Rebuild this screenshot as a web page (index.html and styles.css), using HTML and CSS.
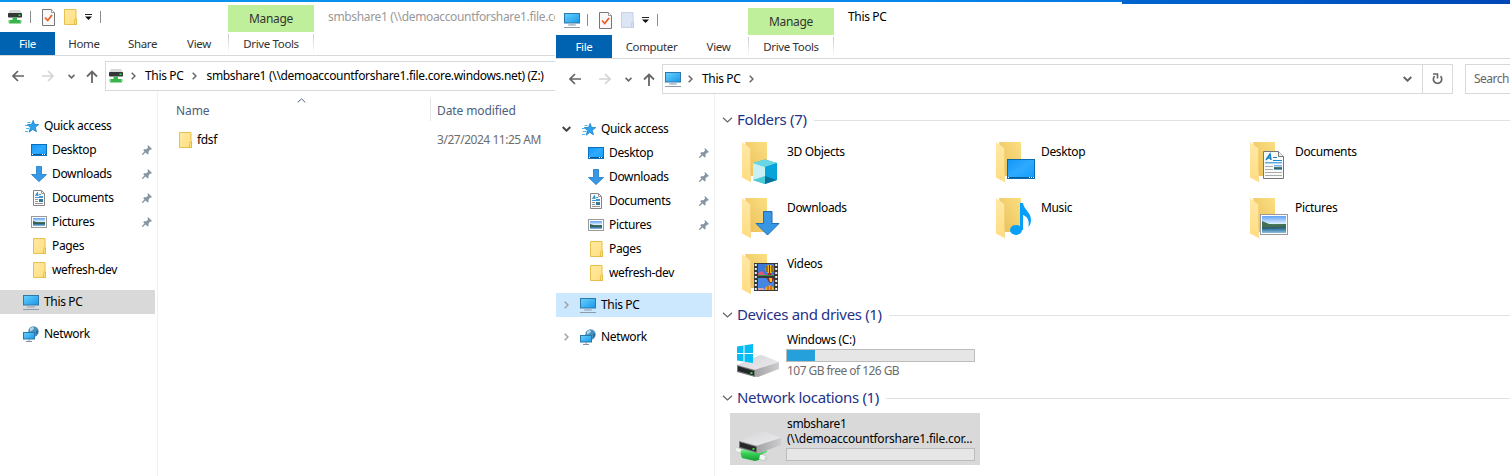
FILE: index.html
```
<!DOCTYPE html>
<html lang="en">
<head>
<meta charset="utf-8">
<title>File Explorer</title>
<link rel="stylesheet" href="styles.css">
</head>
<body>
<svg class="defs" width="0" height="0">
  <defs>
    <linearGradient id="gScreen" x1="0" y1="0" x2="1" y2="1"><stop offset="0" stop-color="#67d2ff"/><stop offset="1" stop-color="#1b96e8"/></linearGradient>
    <linearGradient id="gBlue" x1="0" y1="0" x2="1" y2="1"><stop offset="0" stop-color="#1296f8"/><stop offset=".5" stop-color="#2eaaff"/><stop offset="1" stop-color="#129dfa"/></linearGradient>
    <linearGradient id="gFolder" x1="0" y1="0" x2="1" y2="1"><stop offset="0" stop-color="#ffe9a2"/><stop offset="1" stop-color="#ffdf7e"/></linearGradient>
    <linearGradient id="gBack" x1="0" y1="1" x2="1" y2="0"><stop offset="0" stop-color="#e9be56"/><stop offset="1" stop-color="#fbdf83"/></linearGradient>
    <linearGradient id="gFlap" x1="0" y1="0" x2="0" y2="1"><stop offset="0" stop-color="#ffe9a8"/><stop offset="1" stop-color="#ffdc80"/></linearGradient>
    <linearGradient id="gSky" x1="0" y1="0" x2="0" y2="1"><stop offset="0" stop-color="#5fa0f6"/><stop offset=".45" stop-color="#dceefc"/><stop offset=".5" stop-color="#4e7d67"/><stop offset=".7" stop-color="#37665d"/><stop offset=".8" stop-color="#3f82ae"/><stop offset="1" stop-color="#8fc0dc"/></linearGradient>
    <linearGradient id="gMetal" x1="0" y1="0" x2="1" y2="1"><stop offset="0" stop-color="#d6d6da"/><stop offset="1" stop-color="#ececee"/></linearGradient>
    <linearGradient id="gSide" x1="0" y1="0" x2="1" y2="0"><stop offset="0" stop-color="#a2a2a5"/><stop offset="1" stop-color="#cdcdd0"/></linearGradient>
    <linearGradient id="gPipe" x1="0" y1="0" x2="0" y2="1"><stop offset="0" stop-color="#8bf09d"/><stop offset=".4" stop-color="#35cf53"/><stop offset="1" stop-color="#169b34"/></linearGradient>
  </defs>
  <symbol id="pc" viewBox="0 0 16 16"><rect x=".5" y="1.5" width="15" height="9.5" fill="url(#gScreen)" stroke="#2f78ab"/><path d="M4 13h8" stroke="#8ea4b5"/><path d="M6 12.3h4" stroke="#a8b8c4"/><path d="M0 15.500h16" stroke="#8d9baa"/></symbol>
  <symbol id="netdrive" viewBox="0 0 16 16"><path d="M3 1h10l2 3.500H1z" fill="#d9d9db"/><rect x="1" y="4" width="14" height="4.500" rx=".8" fill="#353637"/><rect x="11.500" y="5.500" width="2" height="1.500" fill="#39df50"/><path d="M5.500 8.500h4.500v2.500h4v3.500H2V11h3.500z" fill="#39b44c"/><path d="M1 12.500h2M13 12.500h2" stroke="#8fdf9a" stroke-width="2"/></symbol>
  <symbol id="check" viewBox="0 0 13 17"><path d="M.5.5h9l3 3v13H.5z" fill="#f8f8f8" stroke="#777"/><path d="M9.500.5v3h3" fill="#fff" stroke="#999"/><path d="M3 8.500l2.700 3L10 6" fill="none" stroke="#f05a22" stroke-width="1.700"/></symbol>
  <symbol id="folder" viewBox="0 0 13 16"><path d="M.5.5h11.500v9.500h.5v5.500H.5z" fill="url(#gFolder)" stroke="#e8c04c"/><path d="M10.500 15.500v-4l1-1.500h1v5.500z" fill="#ffe48c" stroke="#dfb43d" stroke-width=".8"/></symbol>
  <symbol id="folder-ghost" viewBox="0 0 13 16"><path d="M.5.5h11.500v9.500h.5v5.500H.5z" fill="#dbe5f4" stroke="#c6d2e5"/><path d="M10.500 15.500v-4l1-1.500h1v5.500z" fill="#d4dff0" stroke="#bdcbe1" stroke-width=".8"/></symbol>
  <symbol id="qat-menu" viewBox="0 0 7 6"><path d="M0 .5h7" stroke="#222"/><path d="M0 2.500h7L3.500 6z" fill="#111"/></symbol>
  <symbol id="back" viewBox="0 0 12 12"><path d="M12 6H1.200M6 1L1 6l5 5" fill="none" stroke="currentColor" stroke-width="1.700"/></symbol>
  <symbol id="up" viewBox="0 0 12 13"><path d="M6 13V1.500M1 6.500l5-5 5 5" fill="none" stroke="currentColor" stroke-width="1.800"/></symbol>
  <symbol id="chev" viewBox="0 0 10 6"><path d="M.5.7L5 5 9.500.7" fill="none" stroke="currentColor" stroke-width="1.200"/></symbol>
  <symbol id="chev-bold" viewBox="0 0 8 5"><path d="M.6.700L4 4 7.400.700" fill="none" stroke="currentColor" stroke-width="1.800"/></symbol>
  <symbol id="chev-r" viewBox="0 0 5 8"><path d="M.7.7L4 4 .7 7.300" fill="none" stroke="currentColor" stroke-width="1.500"/></symbol>
  <symbol id="refresh" viewBox="0 0 11 12"><path d="M8.500 3.200A4.200 4.200 0 1 1 2.600 3.200" fill="none" stroke="#666" stroke-width="1.700"/><path d="M1 1h4.500v4.500" fill="none" stroke="#666" stroke-width="1.600"/></symbol>
  <symbol id="star" viewBox="0 0 14 13"><path d="M8.200.3l1.300 4 4.300.3-3.500 2.700 1.200 4.500-3.700-2.400-3.700 2.800 1.300-4.600L2.300 4.600l4.300-.3z" fill="#2aa3f0" stroke="#1878bd" stroke-width=".7"/><path d="M2.500 2.500h3M0 5.500h3M1 8.500h3M0 11.500h3" stroke="#4fb5ef"/></symbol>
  <symbol id="desktop" viewBox="0 0 16 12"><rect x=".5" y=".5" width="15" height="11" fill="url(#gBlue)" stroke="#0a6fbd"/><path d="M1 10.500h14" stroke="#08588f"/><path d="M1 10.500h1M11 10.500h1M13 10.500h1" stroke="#fff"/></symbol>
  <symbol id="down" viewBox="0 0 16 16"><path d="M5.500.5h5v8h5L8 15.600.500 8.500h5z" fill="#3698e8" stroke="#1f78c5" stroke-width=".8"/></symbol>
  <symbol id="doc" viewBox="0 0 12 16"><path d="M.5.5h8l3 3v12H.5z" fill="#fafafa" stroke="#858585"/><path d="M8.500.5v3h3" fill="none" stroke="#999"/><path d="M2.500 6L4.500 2.500 5 6M3 5h2" stroke="#197fc4" fill="none"/><path d="M6 4.500h2M6 6.500h4M2 7.500h8" stroke="#2a8fd3" stroke-width=".9"/><path d="M2 9.500h3M2 11.500h3M2 13.500h8" stroke="#999"/><rect x="6" y="9" width="4" height="3" fill="#35789d"/></symbol>
  <symbol id="pic" viewBox="0 0 16 12"><rect x=".5" y=".5" width="15" height="11" fill="#fff" stroke="#999"/><rect x="2" y="2" width="12" height="8" fill="url(#gSky)"/><path d="M2 5l5 1.500 4 .5 3-.5v1.300H2z" fill="#365f55"/></symbol>
  <symbol id="net" viewBox="0 0 16 16"><circle cx="10.500" cy="5.500" r="5.200" fill="#4a90ba"/><path d="M7 2.500l3-1.700 1 2-2 1.700-2 1z" fill="#b5d9e8"/><path d="M13 5l2-1v3l-2 2z" fill="#2d6f9c"/><rect x=".5" y="6.500" width="11" height="6.500" fill="url(#gScreen)" stroke="#2779ad"/><path d="M6 13v2M3 15.500h6" stroke="#8094a5"/></symbol>
  <symbol id="pin" viewBox="0 0 10 10"><path d="M6 0l4 4-1 .8-.7-.2-1.800 1.900.1 2.200-1 .9L1.200 5.200l.9-1 2.300.1L6.100 2.500 5.500 1z" fill="#8795a3"/><path d="M3.500 6.500L.3 9.700" stroke="#8795a3" stroke-width="1.300"/></symbol>
  <symbol id="bigfolder" viewBox="0 0 46 44"><path d="M3 0h22v34H9z" fill="url(#gBack)"/><path d="M0 0l8.500 6.500V40L0 35.500z" fill="url(#gFlap)"/><path d="M8.500 6.500V40" stroke="#f4cd70" stroke-width=".6"/></symbol>
  <symbol id="hdd" viewBox="0 0 44 24"><path d="M1 11L23 1.500q2-.8 4 0L43 8 18 16z" fill="url(#gMetal)"/><path d="M18 16l25-8v7L22 23l-4-.5z" fill="url(#gSide)"/><path d="M1 11l18 5v7L1 18z" fill="#77777a"/><path d="M2 12.300L18 17v4.500L2 17z" fill="#262729"/><rect x="14.500" y="18" width="2" height="2" fill="#35dc45"/></symbol>
</svg>

<div class="wallpaper"><div class="wallpaper-left"></div><div class="wallpaper-right"></div></div>
<div class="desktop">
  <section class="window share">
    <header class="titlebar">
      <div class="qat">
        <svg class="i16"><use href="#netdrive"/></svg><i class="rule"></i>
        <svg class="i-check"><use href="#check"/></svg>
        <svg class="i-folder"><use href="#folder"/></svg>
        <svg class="i-menu"><use href="#qat-menu"/></svg><i class="rule end"></i>
      </div>
      <div class="context">Manage</div>
      <div class="caption inactive">smbshare1 (\\demoaccountforshare1.file.core.windows.net) (Z:)</div>
    </header>
    <nav class="tabs">
      <a class="file">File</a><a class="home">Home</a><a class="sharetab">Share</a><a class="view">View</a><a class="tools">Drive Tools</a>
    </nav>
    <div class="address-row">
      <div class="arrows">
        <svg class="a-back"><use href="#back"/></svg><svg class="a-fwd"><use href="#back"/></svg><svg class="a-hist"><use href="#chev-bold"/></svg><svg class="a-up"><use href="#up"/></svg>
      </div>
      <div class="address">
        <svg class="i16"><use href="#netdrive"/></svg><svg class="sep"><use href="#chev-r"/></svg>
        <span>This PC</span><svg class="sep"><use href="#chev-r"/></svg>
        <span class="path">smbshare1 (\\demoaccountforshare1.file.core.windows.net) (Z:)</span>
      </div>
    </div>
    <div class="body">
      <aside class="tree">
        <div class="node root"><svg class="i-star"><use href="#star"/></svg>Quick access</div>
        <div class="node"><svg class="i-wide"><use href="#desktop"/></svg>Desktop<svg class="pin"><use href="#pin"/></svg></div>
        <div class="node"><svg class="i16"><use href="#down"/></svg>Downloads<svg class="pin"><use href="#pin"/></svg></div>
        <div class="node"><svg class="i-doc"><use href="#doc"/></svg>Documents<svg class="pin"><use href="#pin"/></svg></div>
        <div class="node"><svg class="i-wide"><use href="#pic"/></svg>Pictures<svg class="pin"><use href="#pin"/></svg></div>
        <div class="node"><svg class="i-folder"><use href="#folder"/></svg>Pages</div>
        <div class="node"><svg class="i-folder"><use href="#folder"/></svg>wefresh-dev</div>
        <div class="node root gap selected"><svg class="i16"><use href="#pc"/></svg>This PC</div>
        <div class="node root gap"><svg class="i16"><use href="#net"/></svg>Network</div>
      </aside>
      <main class="details">
        <div class="columns"><div class="col-name">Name<svg class="sort"><use href="#chev"/></svg></div><div class="col-date">Date modified</div></div>
        <div class="file-row"><div class="file-name"><svg class="i-folder"><use href="#folder"/></svg>fdsf</div><div class="file-date">3/27/2024 11:25 AM</div></div>
      </main>
    </div>
  </section>

  <section class="window thispc">
    <header class="titlebar">
      <div class="qat">
        <svg class="i16"><use href="#pc"/></svg><i class="rule"></i>
        <svg class="i-check"><use href="#check"/></svg>
        <svg class="i-folder"><use href="#folder-ghost"/></svg>
        <svg class="i-menu"><use href="#qat-menu"/></svg><i class="rule end"></i>
      </div>
      <div class="context">Manage</div>
      <div class="caption">This PC</div>
    </header>
    <nav class="tabs">
      <a class="file">File</a><a class="computer">Computer</a><a class="view">View</a><a class="tools">Drive Tools</a>
    </nav>
    <div class="address-row">
      <div class="arrows">
        <svg class="a-back"><use href="#back"/></svg><svg class="a-fwd"><use href="#back"/></svg><svg class="a-hist"><use href="#chev-bold"/></svg><svg class="a-up"><use href="#up"/></svg>
      </div>
      <div class="address">
        <svg class="i16"><use href="#pc"/></svg><svg class="sep"><use href="#chev-r"/></svg>
        <span>This PC</span><svg class="sep"><use href="#chev-r"/></svg>
        <svg class="drop"><use href="#chev-bold"/></svg>
        <div class="refresh"><svg class="i-refresh"><use href="#refresh"/></svg></div>
      </div>
      <div class="search">Search</div>
    </div>
    <div class="body">
      <aside class="tree">
        <div class="node root"><svg class="twist open"><use href="#chev-bold"/></svg><svg class="i-star"><use href="#star"/></svg>Quick access</div>
        <div class="node"><svg class="i-wide"><use href="#desktop"/></svg>Desktop<svg class="pin"><use href="#pin"/></svg></div>
        <div class="node"><svg class="i16"><use href="#down"/></svg>Downloads<svg class="pin"><use href="#pin"/></svg></div>
        <div class="node"><svg class="i-doc"><use href="#doc"/></svg>Documents<svg class="pin"><use href="#pin"/></svg></div>
        <div class="node"><svg class="i-wide"><use href="#pic"/></svg>Pictures<svg class="pin"><use href="#pin"/></svg></div>
        <div class="node"><svg class="i-folder"><use href="#folder"/></svg>Pages</div>
        <div class="node"><svg class="i-folder"><use href="#folder"/></svg>wefresh-dev</div>
        <div class="node root gap selected"><svg class="twist"><use href="#chev-r"/></svg><svg class="i16"><use href="#pc"/></svg>This PC</div>
        <div class="node root gap"><svg class="twist"><use href="#chev-r"/></svg><svg class="i16"><use href="#net"/></svg>Network</div>
      </aside>
      <main class="groups">
        <h2 class="group g-folders"><svg><use href="#chev"/></svg><span>Folders (7)</span></h2>
        <div class="tiles">
          <div class="tile"><svg class="big" viewBox="0 0 46 44"><use href="#bigfolder" width="46" height="44"/><path d="M11 21l12-3.500L35 21v17l-12 4-12-4z" fill="#25b9d6"/><path d="M11 21l12-3.500L35 21l-12 4z" fill="#6ad6e4"/><path d="M11 21l12 4v11l-12 2z" fill="#c9f0f4"/><path d="M35 21l-12 4v11l12 2z" fill="#08a4d9"/><path d="M11 38l12-4v8z" fill="#4fcbd8"/><path d="M35 38l-12-4v8z" fill="#04729b"/></svg>3D Objects</div>
          <div class="tile"><svg class="big" viewBox="0 0 46 44"><use href="#bigfolder" width="46" height="44"/><rect x="11.500" y="17.500" width="27" height="19" fill="url(#gBlue)" stroke="#0d69ac"/><path d="M12 35.500h26" stroke="#075f9c"/><path d="M12 35.500h1M33 35.500h1M35 35.500h1M37 35.500h1" stroke="#fff"/></svg>Desktop</div>
          <div class="tile"><svg class="big" viewBox="0 0 46 44"><use href="#bigfolder" width="46" height="44"/><path d="M13.500 9.500h15l5 5v22h-20z" fill="#fafafa" stroke="#777"/><path d="M28.500 9.500v5h5" fill="#eee" stroke="#777"/><path d="M16 18l4-6 1 6M17 16h4" fill="none" stroke="#167fc3" stroke-width="1.500"/><path d="M23 15.500h4M23 18.500h9M15 20.800h17" stroke="#1686ce"/><path d="M15 24.500h8M15 27.500h8M15 30.500h17M15 33.500h17" stroke="#aaa"/><rect x="24" y="23" width="8" height="5" fill="url(#gSky)"/></svg>Documents</div>
          <div class="tile"><svg class="big" viewBox="0 0 46 44"><use href="#bigfolder" width="46" height="44"/><path d="M21.500 13.500h8.500v12h7L25.500 37 14 25.500h7.500z" fill="#3797e5" stroke="#1f6fb5"/></svg>Downloads</div>
          <div class="tile"><svg class="big" viewBox="0 0 46 44"><use href="#bigfolder" width="46" height="44"/><ellipse cx="20" cy="32" rx="6" ry="5" fill="#06a0f8"/><path d="M24 5h3c1 7 8 9 8 17 0 3-1 5-2.500 7 1-7-1-10-5.500-12v15h-3z" fill="#06a0f8"/></svg>Music</div>
          <div class="tile"><svg class="big" viewBox="0 0 46 44"><use href="#bigfolder" width="46" height="44"/><rect x="10.500" y="16.500" width="27" height="20" fill="#fff" stroke="#999"/><rect x="12" y="18" width="24" height="17" fill="url(#gSky)"/><path d="M12 23c5 2 8 4 12 4l12-1v3H12z" fill="#42714f"/><path d="M12 29.500l24-1v1.500l-24 1z" fill="#2c5f7b"/></svg>Pictures</div>
          <div class="tile"><svg class="big" viewBox="0 0 46 44"><use href="#bigfolder" width="46" height="44"/><rect x="12" y="9" width="24" height="28" fill="#393939"/><path d="M13.800 10v26M34.200 10v26" stroke="#eee" stroke-width="2" stroke-dasharray="2 2"/><rect x="16" y="10" width="16" height="12" fill="#3b78d7"/><rect x="16" y="24" width="16" height="12" fill="#4586e5"/><path d="M16 19l4-2 4 5h-8z" fill="#df5970"/><path d="M16 21h16v1H16z" fill="#399148"/><ellipse cx="27.500" cy="15" rx="4" ry="4.300" fill="#f1b714"/><path d="M25 12v6M27.500 11v8M30 12v6" stroke="#3a3030"/><path d="M26 19h3v2h-3z" fill="#b22a24"/><path d="M24.500 24h8l-3 5h-2z" fill="#8d2530"/><path d="M27 24h3v4h-2z" fill="#eec31b"/><path d="M23 36c0-6 9-6 9 0z" fill="#efb41a"/><path d="M26 32v4M29 32v4" stroke="#c43026"/><path d="M16 34h5l2 2h-7z" fill="#d9a3b5"/></svg>Videos</div>
        </div>
        <h2 class="group g-devices"><svg><use href="#chev"/></svg><span>Devices and drives (1)</span></h2>
        <div class="drive">
          <svg class="drive-icon" viewBox="0 0 46 52"><use href="#hdd" x="0" y="27" width="44" height="24"/><path d="M1 19.500l6.500-1V26H1zM8.500 18.300l8.500-1.300v9H8.500zM1 27h6.500v7.500L1 33.500zM8.500 27H17v9l-8.500-1.300z" fill="#05bdf4"/></svg>
          <div class="drive-text"><div>Windows (C:)</div><div class="meter"><div class="used"></div></div><div class="free">107 GB free of 126 GB</div></div>
        </div>
        <h2 class="group g-network"><svg><use href="#chev"/></svg><span>Network locations (1)</span></h2>
        <div class="drive net-drive">
          <svg class="drive-icon" viewBox="0 0 46 52"><path d="M0 34.500q-1.500 2 0 4l8 3v-5z" fill="#eef5ef" stroke="#b6c4b8" stroke-width=".5"/><path d="M20 40l10 2.500q3 2.500 0 5.500l-9-2z" fill="#f1f6f2" stroke="#a9b5ab" stroke-width=".6"/><ellipse cx="30" cy="45.500" rx="1.600" ry="2.500" fill="#cfd6d0"/><path d="M5 37l3-1 15 4 4-2 4-1v2l-7 3-1 5-4 1-13-3q-2-4-1-8z" fill="url(#gPipe)"/><use href="#hdd" x="2" y="17" width="44" height="24"/></svg>
          <div class="drive-text"><div class="share-name">smbshare1</div><div class="share-path">(\\demoaccountforshare1.file.cor...</div><div class="meter"></div></div>
        </div>
      </main>
    </div>
  </section>
</div>
</body>
</html>
```
FILE: styles.css
```
* { box-sizing: border-box; }
body { margin: 0; width: 1510px; height: 476px; overflow: hidden; background: #fff; color: #000; font: 12px/16px "Noto Sans", "Open Sans", sans-serif; letter-spacing: -0.35px; }
svg { display: block; flex: none; }
.defs { position: absolute; }
.wallpaper { display: flex; height: 2px; background: linear-gradient(90deg, #0a96ef, #0786e9 60%, #005bd2); }
.wallpaper-left { width: 1122px; }
.wallpaper-right { flex: 1; height: 4px; background: linear-gradient(90deg, #0065d0, #0047b8); }
.desktop { display: flex; height: 474px; }
.window { display: flex; flex-direction: column; overflow: hidden; flex: none; white-space: nowrap; }
.share { width: 555px; }
.thispc { width: 954px; margin-left: 1px; }

.titlebar { display: flex; height: 30px; }
.thispc .titlebar { height: 33px; padding-top: 3px; }
.qat { display: flex; flex: none; align-items: center; width: 228px; padding-left: 7px; }
.thispc .qat { width: 192px; padding-left: 8px; }
.qat .rule { width: 1px; height: 12px; margin: 0 11px 0 7px; background: #8c8c8c; }
.qat .rule.end { margin: 0 0 0 8px; }
.qat .i-folder { margin: 0 8px 0 9px; }
.i16 { width: 16px; height: 16px; }
.i-check { width: 13px; height: 17px; }
.i-folder { width: 13px; height: 16px; }
.i-menu { width: 7px; height: 6px; }
.i-star { width: 14px; height: 13px; }
.i-wide { width: 16px; height: 12px; }
.i-doc { width: 12px; height: 16px; }
.context { flex: none; width: 86px; margin-top: 3px; background: #c0ef9b; color: #333; line-height: 28px; text-align: center; letter-spacing: -0.3px; }
.caption { padding-left: 14px; line-height: 30px; }
.thispc .caption { line-height: 23px; }
.caption.inactive { flex: 1; min-width: 0; overflow: hidden; color: #999; }

.tabs { display: flex; height: 24px; border-bottom: 1px solid #d9d9d9; font-size: 11.5px; line-height: 23px; color: #333; }
.tabs a { text-align: center; }
.tabs .file { width: 55px; background: #0063b1; color: #fff; }
.thispc .tabs .file { width: 56px; }
.tabs .home { width: 58px; }
.tabs .sharetab { width: 59px; }
.tabs .view { width: 54px; }
.tabs .computer { width: 79px; }
.thispc .tabs .view { width: 55px; }
.tabs .tools { width: 86px; margin-left: 2px; background: linear-gradient(#ccc, #fff) left / 1px 20px no-repeat, linear-gradient(#ccc, #fff) right / 1px 20px no-repeat; }

.address-row { display: flex; height: 35px; padding-top: 5px; }
.arrows { display: flex; flex: none; align-items: center; width: 105px; padding-left: 12px; color: #666; }
.thispc .arrows { width: 106px; padding-left: 13px; }
.a-back, .a-fwd { width: 12px; height: 12px; }
.a-fwd { margin-left: 18px; color: #d4d4d4; transform: scaleX(-1); }
.a-hist { width: 7px; height: 5px; margin-left: 14px; }
.a-up { width: 12px; height: 13px; margin-left: 11px; }
.address { display: flex; align-items: center; flex: 1; min-width: 0; border: 1px solid #d9d9d9; border-right: 0; padding-left: 2px; }
.address .sep { width: 5px; height: 8px; margin: 0 9px 0 7px; color: #666; }
.address span + .sep { margin-left: 9px; }
.address .path { letter-spacing: -0.32px; }
.thispc .address { flex: none; width: 791px; border-right: 1px solid #d9d9d9; }
.drop { width: 9px; height: 6px; margin-left: auto; margin-right: 10px; color: #666; }
.refresh { display: flex; align-items: center; justify-content: center; width: 30px; height: 28px; border-left: 1px solid #d9d9d9; }
.i-refresh { width: 11px; height: 12px; }
.search { flex: 1; margin-left: 12px; border: 1px solid #d9d9d9; border-right: 0; padding-left: 8px; line-height: 27px; color: #666; letter-spacing: -0.5px; }

.body { display: flex; flex: 1; }
.tree { width: 158px; padding-top: 23px; border-right: 1px solid #f1f1f1; }
.thispc .tree { width: 159px; }
.node { display: grid; grid-template-columns: 16px 1fr auto; column-gap: 5px; align-items: center; justify-items: start; height: 24px; width: 155px; padding: 0 3px 0 31px; }
.node > svg:first-child { justify-self: center; }
.node .pin { width: 10px; height: 10px; }
.node.root { padding-left: 23px; }
.node.gap { margin-top: 8px; }
.node.selected { background: #d9d9d9; }
.thispc .node { width: 156px; padding-left: 32px; }
.thispc .node.root { padding-left: 5px; grid-template-columns: 11px 19px 1fr; column-gap: 5px; }
.thispc .node.root > svg:nth-child(2) { margin-left: 3px; }
.thispc .node.root > .i-star { margin-left: 5px !important; }
.share .i-star { margin-left: 2px; }
.thispc .node.selected { background: #cce8ff; }
.twist { width: 5px; height: 8px; color: #a0a0a0; }
.twist.open { width: 9px; height: 6px; color: #444; }

.details { flex: 1; padding: 7px 0 0 18px; }
.columns { display: flex; height: 23px; line-height: 25px; color: #4c607a; letter-spacing: -0.05px; }
.col-name { display: flex; width: 255px; border-right: 1px solid #e5e5e5; }
.col-name .sort { width: 9px; height: 5px; margin-left: 88px; transform: scaleY(-1); }
.col-date { padding-left: 6px; }
.col-date { letter-spacing: -0.4px; letter-spacing: -0.1px; width: 120px; }
.col-name { letter-spacing: -0.1px; }
.file-row { display: flex; align-items: center; height: 24px; margin-top: 7px; }
.file-name { display: flex; align-items: center; gap: 5px; width: 261px; padding-left: 3px; }
.file-date { color: #6d6d6d; letter-spacing: -0.47px; }

.groups { flex: 1; padding: 14px 0 0 7px; min-width: 0; }
.group { display: flex; align-items: center; height: 24px; margin: 0; color: #1e3287; font-size: 15px; font-weight: 400; letter-spacing: -0.34px; }
.group span { padding-bottom: 2px; }
.group svg { width: 11px; height: 6px; margin-right: 4px; color: #666; }
.group::after { content: ""; flex: 1; height: 1px; margin-left: 7px; background: #e2e2e2; }
.tiles { display: grid; grid-template-columns: repeat(3, 254px); grid-auto-rows: 56px; height: 171px; padding-top: 4px; }
.tile { display: flex; padding: 8px 0 0 20px; }
.big { width: 46px; height: 44px; margin: -2px -1px 0 0; }
.drive { display: flex; height: 56px; width: 250px; margin-left: 8px; }
.drive-icon { width: 46px; height: 52px; margin: 0 4px 0 6px; overflow: visible; }
.drive-text { width: 189px; padding-top: 5px; }
.drive-text > div:not(.meter) { padding-left: 1px; }
.meter { height: 13px; margin: 1px 0; background: #e6e6e6; border: 1px solid #bcbcbc; }
.used { width: 28px; height: 11px; background: #26a0da; }
.free { color: #6d6d6d; letter-spacing: -0.55px; }
.g-network { margin-top: 3px; }
.net-drive { height: 52px; margin-top: 3px; background: #d9d9d9; }
.net-drive .drive-text { padding-top: 3px; }
.net-drive .drive-text > div:not(.meter) { line-height: 15px; }
.net-drive .share-path { letter-spacing: -0.24px; }
.net-drive .meter { margin-top: 2px; }
```
